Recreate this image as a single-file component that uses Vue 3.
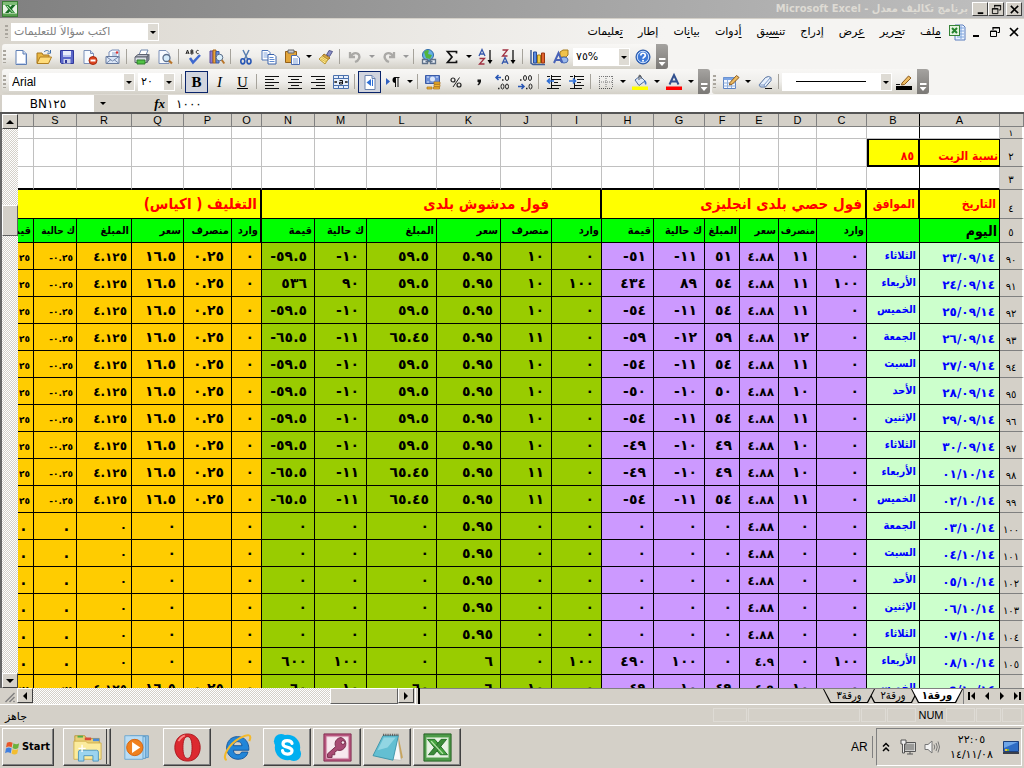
<script setup>
import { ref } from 'vue'

const icons = {
  excel: '<rect x=".5" y=".5" width="15" height="15" fill="#e9f4e6" stroke="#3a7d35"/><path d="M1 1h14v3H1z" fill="#7fbc77"/><path d="M1 12.500h14V15H1z" fill="#57a04f"/><path d="M3 4h4l6 8H9z" fill="#2a8a33"/><path d="M10 4h3.500l-7 8H3z" fill="#176b22"/><path d="M5 5l6 6.500" stroke="#bfe6b8"/>',
  book: '<path d="M6 1h8l2 2v13H6z" fill="#eaf2ff" stroke="#5a7dbd"/><path d="M8 4h7M8 7h7M8 10h7M8 13h7M12 2v13" stroke="#7fa4dc"/><rect x=".5" y="1.500" width="10" height="10" fill="#e5f3df" stroke="#368438"/><path d="M3 4l5 5M8 4L3 9" stroke="#25832e" stroke-width="2"/>',
  blank: '<path d="M3 1.500h7l3.500 3.500v10.500H3z" fill="#fff" stroke="#5f7fb5"/><path d="M10 1.500V5h3.500" fill="#cfdcf3" stroke="#5f7fb5"/><path d="M12.500 6v8.500H4" fill="none" stroke="#c3d2ee"/>',
  open: '<path d="M1 14V4h5l1 2h6v3" fill="#e8b642" stroke="#a8761c"/><path d="M1 14.500L4 8h11.500L12.500 14.500z" fill="#ffdc7a" stroke="#b07f22"/><path d="M8 3c2-2 4-2 5.500 0M14.500 1v3.200h-3.200" fill="none" stroke="#3e6da8"/>',
  save: '<path d="M1.500 1.500h13v13h-12l-1-1z" fill="#5a66c9" stroke="#30389a"/><path d="M4 2h8v6H4z" fill="#e8ecfb"/><path d="M4 6h8v2H4z" fill="#b8c2ee"/><path d="M4.500 10h7v4.500h-7z" fill="#cfd4ea"/><path d="M6 11h2v3H6z" fill="#30389a"/>',
  perm: '<path d="M2 1.500h6.500l3 3v10H2z" fill="#f7faff" stroke="#7a8fb8"/><path d="M8.500 1.500v3h3" fill="#cfdcf3" stroke="#7a8fb8"/><circle cx="11" cy="11.500" r="4" fill="#dd4420" stroke="#a62b10"/><path d="M8.500 11.500h5" stroke="#fff" stroke-width="2"/>',
  mail: '<path d="M4 7V3l3-2h7v8" fill="#f8fbff" stroke="#7a8fb8"/><path d="M7 4h5M7 6h5" stroke="#8aa4ce"/><path d="M1 7.500h13v7H1z" fill="#dbe6f6" stroke="#66799c"/><path d="M1 7.500l6.500 4.500L14 7.500M1 14.500l5-4M14 14.500l-5-4" fill="none" stroke="#7489ae"/><circle cx="12" cy="3.500" r="1.200" fill="#d33"/>',
  print: '<path d="M5 6l2-5h7l-2 5z" fill="#fff" stroke="#6f86ad"/><path d="M1 8l3-2.500h10.500L13 8z" fill="#b9bdc8" stroke="#5e6370"/><path d="M1 8h12v5.500H1z" fill="#d9dce4" stroke="#5e6370"/><path d="M13 8l2-2.500v5l-2 3z" fill="#8b90a0" stroke="#5e6370"/><path d="M3 11h8v4H3z" fill="#51c244" stroke="#2f7f2a"/>',
  preview: '<path d="M2 1.500h7l3 3v10H2z" fill="#f7faff" stroke="#7a8fb8"/><circle cx="9.500" cy="9" r="3.500" fill="#d5ebfb" stroke="#5c6f8c" stroke-width="1.300"/><path d="M12 11.500l3 3" stroke="#b8752a" stroke-width="2.200"/>',
  spell: '<path d="M0 5l1.500-4L3 5M.5 4h2M5 1v4h1.500q1.500-1 0-2H5h1.500q1-1 0-2zM12.500 1.500c-3-1-3 4 0 3" fill="none" stroke="#222"/><path d="M4 9l3 4.500L14 6" fill="none" stroke="#3f69cf" stroke-width="2.500"/>',
  research: '<path d="M1 2h3v12H1z" fill="#8d7bd0" stroke="#5a4a9c"/><path d="M4 1h3v13H4z" fill="#e9a23a" stroke="#a4651a"/><path d="M7 2.500h3V14H7z" fill="#6d8fdc" stroke="#3d5ba3"/><circle cx="10.500" cy="8.500" r="3.300" fill="#d9eefb" stroke="#5b6d88"/><path d="M12.800 11l2.500 3.500" stroke="#b8752a" stroke-width="2"/>',
  cut: '<path d="M5 1l4.500 9M11 1L6.500 10" stroke="#5a7fb0" stroke-width="1.500"/><ellipse cx="4.800" cy="12.300" rx="2" ry="2.600" fill="none" stroke="#2756b4" stroke-width="1.600"/><ellipse cx="11" cy="12.300" rx="2" ry="2.600" fill="none" stroke="#2756b4" stroke-width="1.600"/>',
  copy: '<path d="M1 1.500h6l2 2V11H1z" fill="#fff" stroke="#4d74b8"/><path d="M2.500 4h4M2.500 6h5M2.500 8h5" stroke="#82a5dc"/><path d="M7 5.500h6l2 2V15H7z" fill="#fff" stroke="#3a62aa"/><path d="M8.500 8.500h4M8.500 10.500h5M8.500 12.500h5" stroke="#5e8ad0"/>',
  paste: '<path d="M1.500 2.500h11v11h-11z" fill="#e2a53a" stroke="#946018"/><path d="M4 1h6v3H4z" fill="#c9ccd6" stroke="#666"/><path d="M7.500 6.500h5l3 2.500v6.500h-8z" fill="#fff" stroke="#4a6cb0"/><path d="M9 10h5M9 12h5M9 14h5" stroke="#7d9ed8"/>',
  painter: '<path d="M11 1.500l3.500 1-3 5-3-1.500z" fill="#8b90c8" stroke="#53588c"/><path d="M6 5l6 4-2 1.500L4.500 7z" fill="#d8a848" stroke="#9a6f20"/><path d="M4.500 7l5.500 3.500L7 15 1 10z" fill="#ffe88a" stroke="#b89530"/><path d="M3 10l5 3M4 8.500l5 3.500" stroke="#d9b850"/>',
  undo: '<path d="M3 3v5h5M3.500 7.500C7 2 14 4 12 9.500Q11 12 8 13" fill="none" stroke="#aaa9a6" stroke-width="2.300"/>',
  redo: '<path d="M13 3v5H8M12.500 7.500C9 2 2 4 4 9.500Q5 12 8 13" fill="none" stroke="#aaa9a6" stroke-width="2.300"/>',
  link: '<circle cx="7" cy="6" r="5.500" fill="#65aee6" stroke="#2b6aa6"/><path d="M3 3q3-3 5-1.500L7 5l4 1-2 4-4-1-1-3z" fill="#52b53d"/><path d="M1.500 10.500h5v4h-5zM9.500 10.500h5v4h-5zM4.500 12.500h7" fill="#e7edf5" stroke="#5f7189" stroke-width="1.300"/>',
  sum: '<path d="M12.500 4.500V2.500h-9L8 8l-4.500 5.500h9v-2" fill="none" stroke="#111" stroke-width="1.700"/>',
  sortAsc: '<path d="M1 7l3-6.500L7 7M2 5h4" fill="none" stroke="#3558ac" stroke-width="1.300"/><path d="M1.500 9.500h5L1.500 15h5" fill="none" stroke="#a03040" stroke-width="1.300"/><path d="M12 1v12" stroke="#111" stroke-width="1.300"/><path d="M9.500 11h5L12 15z"/>',
  sortDesc: '<path d="M1.500 1h5l-5 6h5" fill="none" stroke="#a03040" stroke-width="1.300"/><path d="M1 15l3-6.500L7 15M2 13h4" fill="none" stroke="#3558ac" stroke-width="1.300"/><path d="M12 1v12" stroke="#111" stroke-width="1.300"/><path d="M9.500 11h5L12 15z"/>',
  chart: '<path d="M1 1v13l2 1.500h12" fill="none" stroke="#3f5f9a" stroke-width="1.500"/><path d="M3.500 3h3v11h-3z" fill="#5a8be0" stroke="#2b4f99"/><path d="M7.500 6h3v8h-3z" fill="#f3cd45" stroke="#a57e16"/><path d="M11.500 4h3v10h-3z" fill="#e2632c" stroke="#993610"/>',
  draw: '<path d="M7 3l3-2h5v5l-2 2H7z" fill="#f0c24a" stroke="#a67a1c"/><ellipse cx="11" cy="11" rx="4" ry="3" fill="#9bb8ea" stroke="#4a6cb0"/><path d="M1 14L5.500 4l4 10M2.500 11h5.500" fill="none" stroke="#4963b8" stroke-width="2"/>',
  help: '<circle cx="8" cy="8" r="7" fill="#3c78d8" stroke="#1f4fa0"/><circle cx="8" cy="8" r="5.700" fill="none" stroke="#cfe1fb"/><path d="M5.800 6.500c0-3 4.500-3 4.500 0 0 1.500-2.300 1.500-2.300 3.200" fill="none" stroke="#fff" stroke-width="1.700"/><circle cx="8" cy="11.700" r="1" fill="#fff"/>',
  alignL: '<path d="M1 2.500h14M1 5.500h9M1 8.500h14M1 11.500h9M1 14.500h14" stroke="#111"/>',
  alignC: '<path d="M1 2.500h14M4 5.500h8M1 8.500h14M4 11.500h8M1 14.500h14" stroke="#111"/>',
  alignR: '<path d="M1 2.500h14M6 5.500h9M1 8.500h14M6 11.500h9M1 14.500h14" stroke="#111"/>',
  merge: '<path d="M.5 1.500h15v13H.5z" fill="#e6effb" stroke="#4a70ac"/><path d="M.5 4.500h15M.5 11.500h15M5.500 1.500v3M10.500 1.500v3M5.500 11.500v3M10.500 11.500v3" stroke="#4a70ac"/><path d="M1 8h3M15 8h-3M3 7v2M13 7v2" stroke="#111" fill="none"/><path d="M6.500 6.500h3v3.500h-3V8.300h3" fill="none" stroke="#111"/>',
  sheetRtl: '<path d="M3 1.500h7l3 3v11H3z" fill="#fff" stroke="#6c83ad"/><path d="M10 1.500v3h3" fill="#cfdcf3" stroke="#6c83ad"/><path d="M9 5v7L4.500 8.500z" fill="#2f6fd6"/><path d="M10.500 5.500v6.500" stroke="#2f6fd6"/>',
  para: '<path d="M1 4v7l4-3.500z" fill="#2f5fc0"/><path d="M9.500 3.500h5M10.500 3v10M13 3v10" stroke="#111"/><path d="M10.500 3a3 3 0 000 6z"/>',
  currency: '<path d="M.5 1.500h14v8H.5z" fill="#6d8fd6" stroke="#3a5aa6"/><ellipse cx="7.500" cy="5" rx="2.500" ry="2.500" fill="#dbe6fa"/><path d="M2 3h2M11 3h2M2 8h2" stroke="#dbe6fa"/><path d="M9 8h6v2H9zM9 10.500h6v2H9zM2 13h5v2H2zM8.500 13h6v2h-6z" fill="#f2b734" stroke="#aa6f12" stroke-width=".7"/>',
  percent: '<path d="M11.500 3.500L5 13" stroke="#222"/><circle cx="5" cy="6" r="2" fill="none" stroke="#222" stroke-width="1.200"/><circle cx="11" cy="11" r="2" fill="none" stroke="#222" stroke-width="1.200"/>',
  comma: '<path d="M6.500 5.500h3.500q.5 4-3 6l-.5-1q1.500-1 1-2.500h-1z" fill="#111"/>',
  decInc: '<path d="M7 3.500H2M4.500 1L2 3.500 4.500 6" fill="none" stroke="#2756b4" stroke-width="1.500"/><path d="M8 6h1.500M4 14.500h1.500" stroke="#222" stroke-width="1.500"/><ellipse cx="13" cy="4" rx="1.700" ry="2.500" fill="none" stroke="#222"/><ellipse cx="8.500" cy="12.500" rx="1.500" ry="2.500" fill="none" stroke="#222"/><ellipse cx="13" cy="12.500" rx="1.500" ry="2.500" fill="none" stroke="#222"/>',
  decDec: '<path d="M1 12.500h6M4.500 10L7 12.500 4.500 15" fill="none" stroke="#2756b4" stroke-width="1.500"/><path d="M3 6h1.500M9 14.500h1.500" stroke="#222" stroke-width="1.500"/><ellipse cx="13.500" cy="12.500" rx="1.500" ry="2.500" fill="none" stroke="#222"/><ellipse cx="8" cy="4" rx="1.500" ry="2.500" fill="none" stroke="#222"/><ellipse cx="13" cy="4" rx="1.500" ry="2.500" fill="none" stroke="#222"/>',
  outdent: '<path d="M1 2.500h3M6 2.500h9M6 5.500h9M8 8.500h4M6 11.500h9M1 14.500h12M5.500 1v14" stroke="#111"/><path d="M8 7H1.500M4 4.500L1.500 7 4 9.500" fill="none" stroke="#2f6fd6" stroke-width="1.700"/>',
  indent: '<path d="M1 2.500h3M6 2.500h9M8 5.500h7M8 8.500h4M6 11.500h9M1 14.500h12M5.500 1v14" stroke="#111"/><path d="M0 7h6.500M4 4.500L6.500 7 4 9.500" fill="none" stroke="#2f6fd6" stroke-width="1.700"/>',
  border: '<path d="M1.500 2v12M8 2v12M14.500 2v12M1 2.500h14M1 8h14" stroke="#777" stroke-dasharray="1 1" fill="none"/><path d="M1 14.500h14" stroke="#555" stroke-dasharray="1 1"/>',
  fill: '<path d="M3 6l5-4 5 5-6 4.500z" fill="#dce8fa" stroke="#4d6a9a"/><path d="M7 6V2q0-2 2 0v3" fill="none" stroke="#555"/><path d="M12.500 6q3 2 1.500 5-2-1-1.500-5z" fill="#3f77cf"/><path d="M0 12.500h16V16H0z" fill="#ff0"/>',
  fontColor: '<path d="M3.500 10.500L8 1l4.500 9.500M5 7.500h6" fill="none" stroke="#31508e" stroke-width="2"/><path d="M0 12.500h16V16H0z" fill="#f00"/>',
  drawBorder: '<path d="M.5 3.500h12v11H.5z" fill="#f4f8ff" stroke="#5c82c0"/><path d="M.5 3.500h12v2.500H.5z" fill="#7ba4e4"/><path d="M.5 9h12M.5 12h12M4.500 6v8M8.500 6v8" stroke="#8fb0de"/><path d="M7 8.500l6.500-7L16 3.500 9.500 10l-3 1z" fill="#eebc62" stroke="#8b5a1c"/>',
  eraser: '<path d="M2 11L8.500 3.500q3-2 5.500 0v3L8.500 13H3.500z" fill="#e7f0fc" stroke="#54709e"/><path d="M2 11h5l6.500-7.500M7 11l1 2" fill="none" stroke="#7e9ac6"/><path d="M8 14.500h7" stroke="#111"/>',
  penColor: '<path d="M6 9l6.500-7L15 4 8.500 10.500 5.500 11z" fill="#eebc62" stroke="#8b5a1c"/><path d="M0 10.500h4" stroke="#111"/><path d="M0 12h16v4H0z"/>',
}

const standard = [
  { i: 'blank', n: 'جديد' }, { i: 'open', n: 'فتح' }, { i: 'save', n: 'حفظ' }, { i: 'perm', n: 'أذونات' }, { i: 'mail', n: 'بريد إلكتروني' }, { sep: 1 },
  { i: 'print', n: 'طباعة' }, { i: 'preview', n: 'معاينة' }, { sep: 1 }, { i: 'spell', n: 'تدقيق إملائي' }, { i: 'research', n: 'بحث' }, { sep: 1 },
  { i: 'cut', n: 'قص' }, { i: 'copy', n: 'نسخ' }, { i: 'paste', n: 'لصق', more: 1 }, { i: 'painter', n: 'نسخ التنسيق' }, { sep: 1 },
  { i: 'undo', n: 'تراجع', more: 1, off: 1 }, { i: 'redo', n: 'إعادة', more: 1, off: 1 }, { sep: 1 }, { i: 'link', n: 'ارتباط تشعبي' },
  { i: 'sum', n: 'جمع', more: 1 }, { i: 'sortAsc', n: 'فرز تصاعدي' }, { i: 'sortDesc', n: 'فرز تنازلي' }, { sep: 1 }, { i: 'chart', n: 'مخطط' }, { i: 'draw', n: 'رسم' },
]
const formatting = [
  { i: 'alignL', n: 'محاذاة لليسار' }, { i: 'alignC', n: 'توسيط' }, { i: 'alignR', n: 'محاذاة لليمين' }, { i: 'merge', n: 'دمج وتوسيط' }, { sep: 1 },
  { i: 'sheetRtl', n: 'ورقة من اليمين لليسار', on: 1 }, { i: 'para', n: 'اتجاه النص', more: 1 }, { sep: 1 }, { i: 'currency', n: 'عملة' },
  { i: 'percent', n: 'نسبة مئوية' }, { i: 'comma', n: 'نمط الفاصلة' }, { i: 'decInc', n: 'زيادة المنازل' }, { i: 'decDec', n: 'إنقاص المنازل' }, { sep: 1 },
  { i: 'outdent', n: 'إنقاص المسافة' }, { i: 'indent', n: 'زيادة المسافة' }, { sep: 1 }, { i: 'border', n: 'حدود', more: 1 }, { i: 'fill', n: 'لون التعبئة', more: 1 }, { i: 'fontColor', n: 'لون الخط', more: 1 },
]
const borders = [{ i: 'drawBorder', n: 'رسم حدود', more: 1 }, { i: 'eraser', n: 'مسح الحدود' }, { sep: 1 }]
const menus = [
  ['', 'م', 'لف'], ['ت', 'ح', 'رير'], ['', 'ع', 'رض'], ['', 'إ', 'دراج'], ['تن', 'س', 'يق'], ['', 'أ', 'دوات'], ['بيا', 'ن', 'ات'], ['', 'إ', 'طار'], ['', 'ت', 'عليمات'],
]

const cols = [..."ABCDEFGHIJKLMNOPQRS", '']
const ar = (s) => String(s).replace(/\d/g, (d) => '٠١٢٣٤٥٦٧٨٩'[d])
const heads = ['وارد', 'منصرف', 'سعر', 'المبلغ', 'ك حالية', 'قيمة']
const group = (k) => (k < 6 ? 'violet' : k < 12 ? 'olive' : 'amber')
const size = (k, v) => (v === '.' ? '' : [2, 15].includes(k) ? 'mid' : [16, 17].includes(k) ? 'small' : '')

const pack = '0 0.25 16.5 4.125 -0.25 25'
const none = '0 _ 0 0 . .'
const ten = '0 10 5.95 59.5 -10 -59.5 ' + pack
const eleven = '0 11 5.95 65.45 -11 -65.5 ' + pack
const idle = '0 0 4.88 0 0 0 0 0 5.95 0 0 0 ' + none
const source = [
  ['23/09/14', 'الثلاثاء', '0 11 4.88 51 -11 -51 ' + ten],
  ['24/09/14', 'الأربعاء', '100 11 4.88 54 89 434 100 10 5.95 59.5 90 536 ' + pack],
  ['25/09/14', 'الخميس', '0 11 4.88 54 -11 -54 ' + ten],
  ['26/09/14', 'الجمعة', '0 12 4.88 59 -12 -59 ' + eleven],
  ['27/09/14', 'السبت', '0 11 4.88 54 -11 -54 ' + ten],
  ['28/09/14', 'الأحد', '0 10 4.88 50 -10 -50 ' + ten],
  ['29/09/14', 'الإثنين', '0 11 4.88 54 -11 -54 ' + ten],
  ['30/09/14', 'الثلاثاء', '0 10 4.88 49 -10 -49 ' + ten],
  ['01/10/14', 'الأربعاء', '0 10 4.88 49 -10 -49 ' + eleven],
  ['02/10/14', 'الخميس', '0 11 4.88 54 -11 -54 ' + eleven],
  ['03/10/14', 'الجمعة', idle],
  ['04/10/14', 'السبت', idle],
  ['05/10/14', 'الأحد', idle],
  ['06/10/14', 'الإثنين', idle],
  ['07/10/14', 'الثلاثاء', idle],
  ['08/10/14', 'الأربعاء', '100 0 4.9 0 100 490 100 0 6 0 100 600 ' + none],
  ['09/10/14', 'الخميس', '0 10 4.9 49 10 49 0 10 6 60 10 60 ' + pack],
]
const rows = source.map(([date, day, v], n) => ({
  n: ar(90 + n), date: ar(date), day,
  cells: v.split(' ').map((x) => (x === '_' ? '' : ar(x))),
}))

const tasks = ['folder', 'player', 'opera', 'ie', 'skype', 'access', 'notes', 'excel']
const flat = ['player', 'ie']
const question = ref('')
const formula = ref('١٠٠٠')
const cellName = ref('BN١٢٥')
</script>

<template>
  <div class="app">
    <header class="title">
      <svg class="ico" viewBox="0 0 16 16" v-html="icons.excel"></svg>
      <h1 dir="rtl">برنامج تكاليف معدل - Microsoft Excel</h1>
      <div class="wins">
        <button aria-label="تصغير"><svg viewBox="0 0 12 12"><path d="M3 10h6" stroke="#000" stroke-width="2" /></svg></button>
        <button aria-label="استعادة"><svg viewBox="0 0 12 12"><path d="M4 1.500h6.500v5H8.500M4 1v3M1.500 5h6v5.500h-6z" fill="none" stroke="#000" /><path d="M3.500 2h7.500M1 5.500h7" stroke="#000" /></svg></button>
        <button class="close" aria-label="إغلاق"><svg viewBox="0 0 12 12"><path d="M2 2l8 8M10 2l-8 8" stroke="#000" stroke-width="1.700" /></svg></button>
      </div>
    </header>

    <nav class="menubar">
      <i class="grip"></i>
      <div class="combo ask"><input v-model="question" dir="ltr" aria-label="اكتب سؤالاً للتعليمات" placeholder="اكتب سؤالاً للتعليمات" /><b class="drop"></b></div>
      <div class="menus" dir="rtl">
        <button v-for="m in menus" :key="m.join('')"><span>{{ m[0] }}<u>{{ m[1] }}</u>{{ m[2] }}</span></button>
      </div>
      <svg class="ico" viewBox="0 0 16 16" v-html="icons.book"></svg>
      <div class="docwins">
        <button aria-label="تصغير المصنف"><svg viewBox="0 0 12 12"><path d="M3 10h6" stroke="#000" stroke-width="2" /></svg></button>
        <button aria-label="استعادة المصنف"><svg viewBox="0 0 12 12"><path d="M4 1.500h6.500v5H8.500M4 1v3M1.500 5h6v5.500h-6z" fill="none" stroke="#000" /><path d="M3.500 2h7.500M1 5.500h7" stroke="#000" /></svg></button>
        <button aria-label="إغلاق المصنف"><svg viewBox="0 0 12 12"><path d="M2 2l8 8M10 2l-8 8" stroke="#000" stroke-width="1.700" /></svg></button>
      </div>
    </nav>

    <div class="bars">
      <div class="bar">
        <i class="grip"></i>
        <template v-for="(t, k) in standard" :key="k">
          <i v-if="t.sep" class="sep"></i>
          <template v-else>
            <button class="tool" :aria-label="t.n"><svg class="ico" viewBox="0 0 16 16" v-html="icons[t.i]"></svg></button>
            <button v-if="t.more" class="more" :class="{ off: t.off }" :aria-label="'خيارات ' + t.n"></button>
          </template>
        </template>
        <div class="combo zoom"><select aria-label="تكبير"><option>٧٥%</option></select><b class="drop"></b></div>
        <button class="tool" aria-label="تعليمات"><svg class="ico" viewBox="0 0 16 16" v-html="icons.help"></svg></button>
        <button class="cap" aria-label="خيارات الشريط"></button>
      </div>
    </div>

    <div class="bars">
      <div class="bar">
        <i class="grip"></i>
        <div class="combo face"><select aria-label="الخط"><option>Arial</option></select><b class="drop"></b></div>
        <div class="combo pts"><select aria-label="حجم الخط"><option>٢٠</option></select><b class="drop"></b></div>
        <i class="sep"></i>
        <button class="tool letter on" aria-label="غامق"><b>B</b></button>
        <button class="tool letter" aria-label="مائل"><em>I</em></button>
        <button class="tool letter" aria-label="تسطير"><u>U</u></button>
        <i class="sep"></i>
        <template v-for="(t, k) in formatting" :key="k">
          <i v-if="t.sep" class="sep"></i>
          <template v-else>
            <button class="tool" :class="{ on: t.on }" :aria-label="t.n"><svg class="ico" viewBox="0 0 16 16" v-html="icons[t.i]"></svg></button>
            <button v-if="t.more" class="more" :aria-label="'خيارات ' + t.n"></button>
          </template>
        </template>
        <button class="cap" aria-label="خيارات الشريط"></button>
      </div>
      <div class="bar">
        <i class="grip"></i>
        <template v-for="(t, k) in borders" :key="k">
          <i v-if="t.sep" class="sep"></i>
          <template v-else>
            <button class="tool" :aria-label="t.n"><svg class="ico" viewBox="0 0 16 16" v-html="icons[t.i]"></svg></button>
            <button v-if="t.more" class="more" :aria-label="'خيارات ' + t.n"></button>
          </template>
        </template>
        <button class="combo stroke" aria-label="نمط الخط"><i></i><b class="drop"></b></button>
        <button class="tool" aria-label="لون الخط الحدودي"><svg class="ico" viewBox="0 0 16 16" v-html="icons.penColor"></svg></button>
        <button class="cap" aria-label="خيارات الشريط"></button>
      </div>
    </div>

    <div class="formula">
      <input v-model="cellName" class="name" aria-label="مربع الاسم" />
      <button class="namedrop" aria-label="قائمة الأسماء"></button>
      <button class="fx" aria-label="إدراج دالة"><em>fx</em></button>
      <input v-model="formula" class="value" aria-label="شريط الصيغة" />
    </div>

    <main class="work">
      <div class="vscroll">
        <button aria-label="أعلى"><svg viewBox="0 0 12 12"><path d="M2 8l4-4 4 4z" /></svg></button>
        <div class="track"><div class="before"></div><div class="thumb"></div></div>
        <button aria-label="أسفل"><svg viewBox="0 0 12 12"><path d="M2 4l4 4 4-4z" /></svg></button>
      </div>
      <div class="sheet">
        <table dir="rtl">
          <colgroup><col class="cn" /><col v-for="(c, k) in cols" :key="k" :class="'c' + k" /></colgroup>
          <thead>
            <tr><th></th><th v-for="(c, k) in cols" :key="k" scope="col" :class="{ frozen: k === 1 }">{{ c }}</th></tr>
          </thead>
          <tbody>
            <tr class="r1"><th scope="row">١</th><td v-for="k in 20" :key="k" :class="{ edge: k === 2 }"></td></tr>
            <tr class="r2">
              <th scope="row">٢</th><td class="note">نسبة الزيت</td><td class="note edge" dir="ltr">٨٥</td><td v-for="k in 18" :key="k"></td>
            </tr>
            <tr class="r3"><th scope="row">٣</th><td v-for="k in 20" :key="k" :class="{ edge: k === 2 }"></td></tr>
            <tr class="r4">
              <th scope="row">٤</th><td class="sub">التاريخ</td><td class="sub thick">الموافق</td>
              <td colspan="6" class="thick">فول حصي بلدى انجليزى</td>
              <td class="thick"></td><td colspan="5" class="bare">فول مدشوش بلدى</td>
              <td colspan="6" class="thick">التغليف ( اكياس)</td>
            </tr>
            <tr class="r5">
              <th scope="row">٥</th><td class="today">اليوم</td><td></td>
              <td v-for="k in 18" :key="k" :class="{ tight: k === 2 || k === 17, last: k === 18, thick: k === 13 }">{{ heads[(k - 1) % 6] }}</td>
            </tr>
            <tr v-for="r in rows" :key="r.n" class="rd">
              <th scope="row">{{ r.n }}</th>
              <td class="date" dir="ltr">{{ r.date }}</td>
              <td class="day">{{ r.day }}</td>
              <td v-for="(v, k) in r.cells" :key="k" dir="ltr" :class="[group(k), size(k, v), { last: k === 17 }]">{{ v }}</td>
            </tr>
          </tbody>
        </table>
      </div>
    </main>

    <div class="foot">
      <svg class="size" viewBox="0 0 16 15"><path d="M5 14L14 5M9 14l5-5M13 14l1-1" stroke="#808080" stroke-width="1.500" /></svg>
      <button aria-label="يسار"><svg viewBox="0 0 12 12"><path d="M8 2L4 6l4 4z" /></svg></button>
      <div class="htrack"><div class="hthumb"></div></div>
      <button aria-label="يمين"><svg viewBox="0 0 12 12"><path d="M4 2l4 4-4 4z" /></svg></button>
      <i class="split"></i>
      <div class="tabs" dir="rtl">
        <button class="active">ورقة١</button><button>ورقة٢</button><button>ورقة٣</button>
      </div>
      <div class="steps">
        <button aria-label="الأول"><svg viewBox="0 0 12 12"><path d="M9 2L5 6l4 4zM2 2h2v8H2z" /></svg></button>
        <button aria-label="السابق"><svg viewBox="0 0 12 12"><path d="M8 2L4 6l4 4z" /></svg></button>
        <button aria-label="التالي"><svg viewBox="0 0 12 12"><path d="M4 2l4 4-4 4z" /></svg></button>
        <button aria-label="الأخير"><svg viewBox="0 0 12 12"><path d="M3 2l4 4-4 4zM8 2h2v8H8z" /></svg></button>
      </div>
    </div>

    <div class="status">
      <span class="ready">جاهز</span>
      <i class="p1"></i><i class="p2"></i><i class="p3"></i><i class="p4"></i><span class="num">NUM</span><i class="p4"></i><i class="p3"></i><i class="p5"></i>
    </div>

    <footer class="taskbar">
      <button class="start">
        <svg viewBox="0 0 16 16"><path d="M1 3q3-2 6 0L6 8Q3 6 0 8z" fill="#e8572a" /><path d="M8 3.500q3 2 6 0l-1 5q-3 2-6 0z" fill="#6cb23c" /><path d="M0 9q3-2 6 0l-1 5q-3-2-6 0z" fill="#3f7fe0" /><path d="M7 9.500q3 2 6 0l-1 5q-3 2-6 0z" fill="#f3bd30" /></svg>
        Start
      </button>
      <div class="tasks">
        <button v-for="t in tasks" :key="t" :class="['task-' + t, { flat: flat.includes(t) }]" :aria-label="t">
          <svg v-if="t === 'folder'" viewBox="0 0 32 32"><path d="M2 6V3h11l2 3h14v20H2z" fill="#e9cf74" stroke="#b9973c" /><path d="M5 3h6v2H5z" fill="#4fae4a" /><path d="M13 5h7v3h-7z" fill="#d94b38" /><path d="M22 6h7v3h-7z" fill="#4b8bd8" /><path d="M1 9h13l2 2h15v18H1z" fill="#fbeb9d" stroke="#cfb04c" /><path d="M6 31V21q0-2 2-2h18q2 0 2 2v10h-6v-6H12v6z" fill="#9bd4ef" stroke="#4a94be" /><path d="M10 13v8M6 17h8" stroke="#fff" stroke-width="1.500" /></svg>
          <svg v-else-if="t === 'player'" viewBox="0 0 32 32"><path d="M8 3h20v24H8z" fill="#8fc2e6" stroke="#5b97c4" /><path d="M5 4h20v24H5z" fill="#a8d3f0" stroke="#5b97c4" /><path d="M2 3h20v26H2z" fill="#b9dcf4" stroke="#6aa6d0" /><circle cx="13" cy="16" r="9" fill="#f0801e" stroke="#d2600c" /><path d="M10 10v12l9-6z" fill="#fff" /></svg>
          <svg v-else-if="t === 'opera'" viewBox="0 0 32 32"><path fill-rule="evenodd" d="M16 1C7 1 2 8 2 16s5 15 14 15 14-7 14-15S25 1 16 1zm0 3c4 0 5 6 5 12s-1 12-5 12-5-6-5-12 1-12 5-12z" fill="#dc2a30" stroke="#a9141c" /><path d="M6 9q3-5 7-6" stroke="#ff8a88" stroke-width="2" fill="none" /></svg>
          <svg v-else-if="t === 'ie'" viewBox="0 0 32 32"><path fill-rule="evenodd" d="M16 4C8 4 4 10 4 16.500S9 29 16.500 29c6 0 10-3 11-8h-7c-1 2-2 3-4 3-3 0-5-2-5-5h17C29 10 24 4 16 4zm-4.500 10c.5-3 2-4.500 4.700-4.500S20.500 11 21 14z" fill="#2386d8" stroke="#0f5299" /><path d="M4 30C-2 27 7 12 18 6S32 2 29 9" fill="none" stroke="#f3b92c" stroke-width="2.300" /></svg>
          <svg v-else-if="t === 'skype'" viewBox="0 0 32 32"><circle cx="9" cy="9" r="8" fill="#00aff0" /><circle cx="23" cy="23" r="8" fill="#00aff0" /><circle cx="16" cy="16" r="14" fill="#00aff0" /><path d="M21 11.500c-1-4-10-4.500-10 .5 0 5 10 2.500 10 7.500 0 5.500-10 4.500-10.500 0" fill="none" stroke="#fff" stroke-width="3.500" stroke-linecap="round" /></svg>
          <svg v-else-if="t === 'access'" viewBox="0 0 32 32"><path d="M1 1h30v30H1z" fill="#b8577f" stroke="#7f2b50" /><path d="M4 4h24v24H4z" fill="#f7e8ee" stroke="#dca6bc" /><path fill-rule="evenodd" d="M20 5a7 7 0 00-6 10L5 23v4h5v-3h3v-3l3-2A7 7 0 1020 5zm2 3.500a2 2 0 110 4 2 2 0 010-4z" fill="#a84b73" stroke="#742848" /></svg>
          <svg v-else-if="t === 'notes'" viewBox="0 0 32 32"><path d="M28 3l5 24-4 3z" fill="#c8a45c" /><path d="M27 4l4 26-10-1z" fill="#f8f8f8" stroke="#aaa" stroke-width=".5" /><path d="M11 3h17L22 30 0 25z" fill="#63bfd2" stroke="#3b93a8" /><path d="M12 5l13 0-9 11L5 19z" fill="#a6e0ea" opacity=".7" /><path d="M11 2h17" stroke="#555" stroke-width="2.500" stroke-dasharray="1 1" /></svg>
          <svg v-else viewBox="0 0 32 32"><path d="M1 1h30v30H1z" fill="#4d9b49" stroke="#215a20" /><path d="M4 5h24v22H4z" fill="#e8f3e4" stroke="#9fcb98" /><path d="M5 7h8l14 17h-8z" fill="#45a33e" stroke="#1e6a22" /><path d="M20 7h6L12 24H6z" fill="#3b8b38" stroke="#1e6a22" /><path d="M9 9l13 14" stroke="#b5e3a8" stroke-width="1.500" /></svg>
        </button>
      </div>
      <span class="lang">AR</span>
      <div class="tray">
        <svg class="chev" viewBox="0 0 10 12"><path d="M2 5.500l3-3 3 3M2 10l3-3 3 3" fill="none" stroke="#000" stroke-width="1.500" /></svg>
        <svg class="net" viewBox="0 0 16 16"><path d="M4 4h11v8H4z" fill="#9a9a98" stroke="#fff" /><path d="M3.500 3.500h12v9h-12zM7 15h6M10 12.500V15" fill="none" stroke="#555" /><path d="M1 1h5v4H4.500v9h-2V5H1z" fill="#eee" stroke="#555" /></svg>
        <svg class="vol" viewBox="0 0 16 16"><path d="M1 5.500h3L8 2v12l-4-3.500H1z" fill="#f2f2f2" stroke="#777" /><path d="M10 5.500q1.500 2.500 0 5M12 4q2.500 4 0 8M14 2.500q3 5.500 0 11" fill="none" stroke="#777" /></svg>
        <time><span>٢٢:٠٥</span><span>١٤/١١/٠٨</span></time>
        <svg class="desk" viewBox="0 0 16 16"><path d="M.5 2.500h15v10H.5z" fill="#2f6cc4" stroke="#1c3f7c" /><path d="M1 3h14L1 9z" fill="#6fa6e8" /><path d="M0 13h16v2H0z" fill="#3a3f4a" /><path d="M2 10h2v2H2z" fill="#f3bd30" /><path d="M4 10h2v2H4z" fill="#6cb23c" /></svg>
      </div>
    </footer>
  </div>
</template>

<style>
body { overflow: hidden; }
</style>

<style scoped>
* { box-sizing: border-box; }
.app { height: 100vh; display: flex; flex-direction: column; background: #d4d0c8; color: #000; font: 11px/14px "DejaVu Sans", "Liberation Sans", sans-serif; }
button, input, select { font: inherit; color: inherit; margin: 0; padding: 0; border: 0; background: none; border-radius: 0; }
button { display: flex; align-items: center; justify-content: center; flex: none; }
svg { display: block; flex: none; overflow: visible; }
.ico { width: 16px; height: 16px; }

.title { flex: none; height: 18px; display: flex; align-items: center; padding: 0 2px; background: linear-gradient(90deg, #808080, #c0c0c0); }
.title h1 { margin: 0 4px 0 auto; font: bold 11px/16px "DejaVu Sans Condensed", "DejaVu Sans", sans-serif; color: #dedbd4; white-space: nowrap; }
.wins { display: flex; }
.wins button { width: 16px; height: 14px; background: #d4d0c8; border: 1px solid; border-color: #fff #404040 #404040 #fff; }
.wins svg { width: 11px; height: 11px; }
.wins .close { margin-left: 2px; }

.menubar { flex: none; height: 26px; display: flex; align-items: center; padding: 0 4px; border-top: 1px solid #d4d0c8; background: linear-gradient(90deg, #dad6ce, #f5f4f2 65%); }
.grip { flex: none; width: 3px; height: 13px; margin: 0 3px 0 1px; background: repeating-linear-gradient(#aaa69e 0 2px, transparent 2px 4px); }
.combo { position: relative; flex: none; display: flex; height: 18px; background: #fff; }
.combo select, .combo input { width: 100%; padding: 0 14px 0 3px; appearance: none; outline: 0; }
.drop { position: absolute; right: 1px; top: 1px; bottom: 1px; width: 10px; background: #dedbd4; pointer-events: none; }
.drop::after, .more::after, .namedrop::after { content: ""; display: block; border: 3px solid transparent; border-top-color: #000; border-bottom: 0; }
.drop::after { margin: 7px 2px 0; }
.ask { width: 148px; }
.ask input { color: #808080; }
.ask input::placeholder { color: #808080; opacity: 1; }
.menus { flex: 1; display: flex; gap: 15px; padding: 0 8px; }
.menus u { text-underline-offset: 2px; text-decoration-thickness: 1px; }
.docwins { display: flex; gap: 7px; margin-left: 5px; }
.docwins svg { width: 12px; height: 12px; }

.bars { flex: none; display: flex; gap: 2px; height: 26px; padding: 0 2px; background: linear-gradient(90deg, #dad6ce, #f5f4f2 65%); }
.menubar + .bars { height: 25px; }
.bar { display: flex; align-items: center; height: 25px; border-radius: 3px; background: linear-gradient(#f8f7f5, #efeeeb 50%, #d3d0c7); }
.tool { width: 23px; height: 22px; }
.on { background: #d2d5de; border: 1px solid #0a246a; }
.sep { flex: none; width: 1px; height: 15px; margin: 0 3px 0 2px; background: #a6a39b; }
.more { width: 11px; height: 22px; }
.off::after { border-top-color: #999; }
.cap { align-items: flex-end; width: 12px; height: 25px; margin-left: 2px; padding-bottom: 3px; border-radius: 0 3px 3px 0; background: linear-gradient(#a5a3a0, #7a7875); }
.cap::after { content: ""; width: 7px; height: 8px; background: linear-gradient(#fff 0 2px, transparent 2px 4px, #fff 4px); clip-path: polygon(0 0, 100% 0, 100% 50%, 50% 100%, 0 50%); }
.zoom { width: 57px; margin: 0 1px; }
.face { width: 126px; margin-right: 3px; }
.pts { width: 37px; margin-right: 4px; }
.face select { font-family: "Liberation Sans", sans-serif; font-size: 12px; }
.letter { font: 15px/18px "Liberation Serif", serif; }
.stroke { width: 110px; justify-content: flex-start; padding-left: 14px; }
.stroke i { width: 70px; height: 1px; background: #000; }
.stroke .drop { display: block; }

.formula { flex: none; height: 17px; display: flex; background: #d4d0c8; padding-left: 2px; }
.formula input { background: #fff; outline: 0; }
.name { width: 92px; text-align: center; font-size: 12px; }
.namedrop { width: 18px; }
.fx { width: 56px; padding-right: 3px; justify-content: flex-end; font: bold 13px/14px "Liberation Serif", serif; }
.formula .value { flex: 1; min-width: 0; padding-left: 8px; font-size: 12px; }

.work { flex: 1; min-height: 0; display: flex; border-top: 2px solid #555; }
.vscroll { flex: none; width: 18px; display: flex; flex-direction: column; border-left: 2px solid #666; background: #d4d0c8; }
.vscroll button, .foot > button { width: 16px; height: 15px; background: #d4d0c8; border: 1px solid; border-color: #fff #404040 #404040 #fff; }
.vscroll svg, .foot button svg { width: 12px; height: 12px; }
.track, .htrack { display: flex; background: repeating-conic-gradient(#fff 0 25%, #d4d0c8 0 50%) 0 0 / 2px 2px; }
.track { flex: 1; flex-direction: column; }
.before { flex: 0 0 14%; }
.thumb, .hthumb { background: #d4d0c8; border: 1px solid; border-color: #fff #606060 #606060 #fff; }
.thumb { height: 31px; }

.sheet { flex: 1; min-width: 0; overflow: hidden; background: #fff; }
table { width: 100%; table-layout: fixed; border-collapse: separate; border-spacing: 0; }
.cn { width: 24px; } .c0 { width: 80px; } .c1 { width: 53px; } .c2 { width: 50px; } .c3 { width: 38px; } .c4 { width: 39px; }
.c5 { width: 35px; } .c6 { width: 51px; } .c7 { width: 52px; } .c8 { width: 50px; } .c9 { width: 51px; } .c10 { width: 64px; }
.c11 { width: 70px; } .c12 { width: 52px; } .c13 { width: 53px; } .c14 { width: 30px; } .c15 { width: 48px; } .c16 { width: 52px; }
.c17 { width: 55px; } .c18 { width: 43px; } .c19 { width: 16px; }
th { padding: 0; font-weight: normal; font-size: 10px; line-height: 10px; background: #d4d0c8; border: 0 solid #808080; border-width: 0 1px 1px 0; white-space: nowrap; overflow: hidden; }
thead th { height: 13px; font: 11px/12px "Liberation Sans", sans-serif; }
th.frozen { border-right-color: #000; }
tbody th { vertical-align: bottom; border-right: 2px solid #fff; }
.rd th, .r2 th, .r3 th, .r4 th, .r5 th { padding-bottom: 4px; }
td { padding: 0 3px; text-align: right; white-space: nowrap; overflow: hidden; line-height: 20px; font-family: "DejaVu Sans Condensed", "DejaVu Sans", sans-serif; font-weight: bold; border: 0 solid #c0c0c0; border-width: 0 1px 1px 0; }
.r1 { height: 12px; } .r2 { height: 28px; } .r3 { height: 23px; } .r4 { height: 29px; } .r5 { height: 24px; } .rd { height: 27px; }
.r1 td, .r1 th { line-height: 10px; height: 12px; font-size: 9px; }
td.edge { border-right-color: #000; }
td.note { background: #ff0; color: #f00; font-size: 12px; border: 0 solid #000; border-width: 1px 1px 2px 0; padding: 6px 1px 0 0; line-height: 18px; }
td.note.edge { border-left-width: 2px; border-right-width: 2px; padding-right: 4px; }
.r3 td { border-bottom: 2px solid #000; }
.r4 td { background: #ff0; color: #f00; font-size: 15px; line-height: 24px; border-color: #000; }
.r4 td.sub { font-size: 12px; }
.r4 td.thick, .r5 td.thick { border-right-width: 2px; }
.r4 td.bare { border-right: 0; }
.r5 td { background: #0f0; border-color: #000; font-size: 11px; padding: 0 2px; }
.r5 td.tight { font-size: 10px; padding: 0 1px; }
.r5 td.today { font-size: 14px; }
.rd td { border-color: #000; font: bold 14px/20px "DejaVu Sans", sans-serif; padding-right: 7px; }
.rd td.date { background: #cfc; color: #00f; font-size: 12px; padding: 3px 4px 0 0; }
.rd td.day { background: #cfc; color: #00f; font: bold 11px/20px "DejaVu Sans Condensed", "DejaVu Sans", sans-serif; padding-right: 3px; }
.violet { background: #c9f; } .olive { background: #9c0; } .amber { background: #fc0; }
.rd td.mid { font-size: 12px; padding: 2px 4px 0 0; }
.rd td.small { font-size: 9px; padding-right: 3px; padding-top: 4px; }
.r5 td.last, .rd td.last { padding-left: 0; }

.foot { flex: none; height: 16px; display: flex; }
.foot .size { width: 17px; height: 15px; }
.htrack { flex: 0 1 365px; }
.hthumb { width: 68px; margin-left: auto; }
.split { flex: none; width: 5px; margin-left: 1px; border-left: 1px solid #fff; border-right: 2px solid #000; }
.tabs { flex: 1; display: flex; padding-right: 4px; border-top: 1px solid #808080; }
.tabs button { position: relative; isolation: isolate; width: 44px; height: 14px; font: 11px/12px "DejaVu Sans Condensed", "DejaVu Sans", sans-serif; }
.tabs button::before, .tabs button::after { content: ""; position: absolute; inset: 0 -4px; z-index: -1; background: #d4d0c8; clip-path: polygon(0 0, 100% 0, calc(100% - 7px) 100%, 7px 100%); }
.tabs button::before { z-index: -2; background: #000; }
.tabs button::after { inset: 0 -3px 1px; }
.tabs .active { z-index: 1; font-weight: bold; }
.tabs .active::after { background: #fff; }
.steps { display: flex; border-top: 1px solid #808080; border-left: 1px solid #808080; }
.foot .steps button { width: 15px; height: 14px; }

.status { flex: none; height: 21px; display: flex; align-items: center; gap: 1px; padding: 0 2px 0 5px; border-top: 1px solid #fff; }
.ready { margin-right: auto; padding-top: 3px; }
.status i { height: 14px; border: 1px solid #dedbd5; }
.p1 { width: 34px; } .p2 { width: 112px; } .p3 { width: 25px; } .p4 { width: 29px; } .p5 { width: 20px; }
.num { width: 28px; text-align: center; font-family: "Liberation Sans", sans-serif; }

.taskbar { flex: none; height: 43px; display: flex; align-items: center; padding: 0 2px; border-top: 1px solid #fff; }
.taskbar button { height: 38px; border: 1px solid; border-color: #fff #404040 #404040 #fff; box-shadow: inset -1px -1px #808080; }
.start { width: 52px; gap: 1px; font: bold 11px/14px "DejaVu Sans Condensed", "DejaVu Sans", sans-serif; }
.start svg { width: 15px; height: 15px; }
.tasks { flex: 1; display: flex; gap: 2px; margin-left: 9px; }
.tasks button { width: 48px; }
.tasks svg { width: 29px; height: 29px; }
.taskbar .flat { border-color: transparent; box-shadow: none; }
.taskbar .task-folder { box-shadow: inset -1px -1px #808080, inset -3px 0 #d4d0c8, inset -4px 0 #404040; }
.lang { width: 24px; padding-left: 2px; margin-right: 1px; border-right: 1px solid #808080; line-height: 22px; font-family: "Liberation Sans", sans-serif; font-size: 12px; }
.tray { display: flex; align-items: center; width: 146px; height: 38px; margin-left: 2px; padding: 0 2px 0 4px; border: 1px solid; border-color: #808080 #fff #fff #808080; }
.chev { width: 10px; height: 12px; }
.net, .vol, .desk { width: 16px; height: 16px; }
.net { margin-left: 9px; }
.vol { margin-left: 8px; }
.tray time { flex: 1; display: flex; flex-direction: column; align-items: center; line-height: 15px; direction: ltr; }
</style>
